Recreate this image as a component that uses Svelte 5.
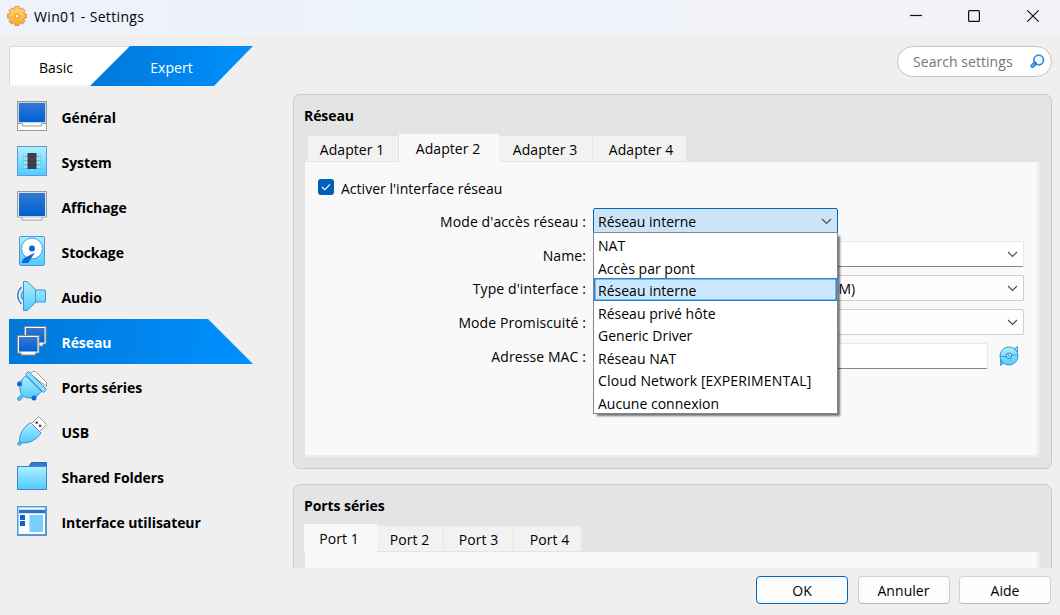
<script>
  const sections = [
    { id: 'general', label: 'Général' },
    { id: 'system', label: 'System' },
    { id: 'display', label: 'Affichage' },
    { id: 'storage', label: 'Stockage' },
    { id: 'audio', label: 'Audio' },
    { id: 'network', label: 'Réseau' },
    { id: 'serial', label: 'Ports séries' },
    { id: 'usb', label: 'USB' },
    { id: 'folders', label: 'Shared Folders' },
    { id: 'ui', label: 'Interface utilisateur' }
  ];
  const adapters = ['Adapter 1', 'Adapter 2', 'Adapter 3', 'Adapter 4'];
  const ports = ['Port 1', 'Port 2', 'Port 3', 'Port 4'];
  const modes = [
    'NAT',
    'Accès par pont',
    'Réseau interne',
    'Réseau privé hôte',
    'Generic Driver',
    'Réseau NAT',
    'Cloud Network [EXPERIMENTAL]',
    'Aucune connexion'
  ];
  let section = $state('network');
  let adapter = $state('Adapter 2');
  let port = $state('Port 1');
  let mode = $state('Réseau interne');
</script>

{#snippet chevron()}
  <svg class="chevron" width="11" height="7" viewBox="0 0 11 7"><path d="M1 1l4.500 4.500L10 1" fill="none" stroke="#4a4a4a" stroke-width="1.100" /></svg>
{/snippet}

{#snippet icon(id)}
  <svg class="icon" width="30" height="30" viewBox="0 0 30 30">
    {#if id === 'general'}
      <rect x=".5" y=".5" width="29" height="29" fill="#fff" stroke="#9a9a9a" />
      <rect x="1" y="1" width="28" height="21" fill="#c3d3ea" />
      <rect x="2" y="2" width="26" height="19" fill="url(#screen)" />
      <path d="M1 22.500h4.500v2.500h19v-2.500h4.500" fill="none" stroke="#9a9a9a" />
    {:else if id === 'system'}
      <rect x=".5" y=".5" width="29" height="29" fill="url(#sky)" stroke="#5b9bd8" />
      <path d="M6 9.500h18M6 13.500h18M6 17.500h18M6 21.500h18" stroke="#5eb0dc" stroke-width="2.600" />
      <path d="M6.500 9h17M6.500 13h17M6.500 17h17M6.500 21h17" stroke="#fff" stroke-width="1.200" />
      <rect x="10.500" y="7" width="9" height="16" fill="#3a3f4b" />
    {:else if id === 'display'}
      <path d="M.5.500h29v25.500h-4.500v3H5v-3H.500z" fill="#fff" stroke="#9a9a9a" />
      <rect x="1" y="1" width="28" height="24.500" fill="#dbe4f1" />
      <rect x="2" y="2" width="26" height="23" fill="url(#screen)" />
      <path d="M5 26h20" stroke="#b0b0b0" />
    {:else if id === 'storage'}
      <rect x="2.500" y=".5" width="25" height="29" rx="1.500" fill="url(#sky)" stroke="#4b95d8" />
      <circle cx="15" cy="12.500" r="10.500" fill="#fff" stroke="#4b9be0" />
      <circle cx="15" cy="12.500" r="2.900" fill="#0f63c4" />
      <path d="M18 16.500l-10.500 5.500q-3 2-2.500 5h5.500q1.500-.5 2.500-3z" fill="#1068ce" />
    {:else if id === 'audio'}
      <path d="M4.500 6q-7.500 8.500 0 17" fill="none" stroke="#2f7fd6" stroke-width="1.300" />
      <path d="M6 10q-3.500 4.500 0 9" fill="#a5dcf7" stroke="#4b95d8" stroke-width="1.200" />
      <path d="M6.500.500h3.500l9 8.500h9q.500 0 .5.500v11q0 .5-.5.500h-9l-9 8.500H6.500z" fill="url(#sky)" stroke="#3f8fd6" />
      <path d="M18.500 9v12" stroke="#4b95d8" />
    {:else if id === 'network'}
      <path d="M7.500.500h21.500v17.500h-3v2H10v-2H7.500z" fill="#fff" stroke="#8b8b80" />
      <rect x="9" y="2" width="18.500" height="14.500" fill="url(#screen)" />
      <path d="M.5 9.500h21.500v17.500h-3.500v2H4v-2H.500z" fill="#fff" stroke="#8b8b80" />
      <rect x="2" y="11" width="18.500" height="14.500" fill="url(#screen)" />
    {:else if id === 'serial'}
      <path d="M12.500 2.500l3.500-2h2.500l11 11v4z" fill="#fff" stroke="#999" />
      <path d="M5 25l-4 4" stroke="#3f8fd6" stroke-width="3.800" />
      <path d="M5.500 24.500l-4 4" stroke="#5bc8f7" stroke-width="1.800" />
      <path d="M8.500 5L3 10.500v7q-.5 4 2.500 7 3 3 7.500 2.500h4.500l7-6.500z" fill="url(#sky)" stroke="#3f8fd6" />
      <path d="M6 9.500l-4 4M21 23.500l-4 3" stroke="#3f8fd6" />
      <circle cx="2.500" cy="13" r="2.500" fill="#1067cc" />
      <circle cx="17" cy="27" r="2.500" fill="#1067cc" />
      <path d="M8.500 3.500l3-3 18 18-3 3z" fill="#84e2fc" stroke="#3f8fd6" />
    {:else if id === 'usb'}
      <path d="M14.500 7.500L21.500.500 29.500 8.500l-7 7z" fill="#fff" stroke="#999" />
      <path d="M18.500 5.500h2.300v2.300h-2.300zM22 8.800h2.300v2.300h-2.300z" fill="#444" />
      <path d="M4.500 25.500l-3.500 3.500" stroke="#3f8fd6" stroke-width="3.600" />
      <path d="M4.500 25.500l-3.500 3.500" stroke="#5bc8f7" stroke-width="1.600" />
      <path d="M13.500 6.500q-10.500 7-11 17-.5 3 2.500 3.500 12 .5 19-10z" fill="url(#sky)" stroke="#3f8fd6" />
    {:else if id === 'folders'}
      <path d="M11.500 6l3-4.500h15v5z" fill="#2f78d4" stroke="#2468bd" />
      <rect x=".5" y="5.500" width="29" height="23" fill="url(#sky)" stroke="#4589c6" />
    {:else}
      <rect x="1" y="1" width="28" height="28" fill="#fff" stroke="#5796cf" stroke-width="2" />
      <path d="M1.500 28V1.500H28.500" fill="none" stroke="#8fdcf8" />
      <path d="M2 5.500h26" stroke="#2c72cc" stroke-width="3.500" />
      <path d="M3 9h5v5H3zM3 15h5v5H3z" fill="#0d62cc" />
      <rect x="12.500" y="9" width="13.500" height="17" fill="#79cffb" />
    {/if}
  </svg>
{/snippet}

{#snippet tabs(items, current, pick)}
  <div class="tabs">
    {#each items as t}
      <button class="tab" class:active={t === current} onclick={() => pick(t)}>{t}</button>
    {/each}
  </div>
{/snippet}

<svg class="defs" width="0" height="0">
  <defs>
    <linearGradient id="screen" x1="0" y1="0" x2="0" y2="1"><stop offset="0" stop-color="#3478d3" /><stop offset="1" stop-color="#0060d2" /></linearGradient>
    <linearGradient id="sky" x1="0" y1="0" x2="0" y2="1"><stop offset="0" stop-color="#aef0fe" /><stop offset="1" stop-color="#4fcbff" /></linearGradient>
    <linearGradient id="gold" x1="0" y1="0" x2="0" y2="1"><stop offset="0" stop-color="#ffda66" /><stop offset="1" stop-color="#f9a72b" /></linearGradient>
  </defs>
</svg>

<div class="window">
  <header>
    <svg width="20" height="20" viewBox="0 0 20 20">
      <g fill="url(#gold)" stroke="#d98545" stroke-width=".9" stroke-linejoin="round">
        <path d="M8 .600h4l.4 2.200.9.400 1.900-1.300 2.800 2.800-1.300 1.900.4.900 2.300.5v4l-2.300.5-.4.900 1.300 1.900-2.800 2.800-1.900-1.300-.9.400-.4 2.200H8l-.4-2.200-.9-.4-1.900 1.300L2 15.300l1.300-1.900-.4-.9L.600 12V8l2.300-.5.400-.9L2 4.700 4.800 1.900l1.900 1.300.9-.4z" />
        <circle cx="10" cy="10" r="2" fill="#fff4dc" />
      </g>
    </svg>
    <span class="title">Win01 - Settings</span>
    <svg class="controls" width="130" height="14" viewBox="0 0 130 14">
      <g fill="none" stroke="#111" stroke-width="1.200">
        <path d="M0 6.500h12" />
        <rect x="58.600" y="1.600" width="10.800" height="10.800" rx="1" />
        <path d="M117.300 1.300l11.400 11.400M128.700 1.300L117.300 12.700" />
      </g>
    </svg>
  </header>

  <div class="toolbar">
    <div class="levels">
      <button class="basic">Basic</button>
      <button class="expert"><span>Expert</span></button>
    </div>
    <div class="search">
      <span>Search settings</span>
      <svg width="15" height="15" viewBox="0 0 15 15">
        <circle cx="8.700" cy="6" r="4.800" fill="#f4fbff" stroke="#3a8fdf" stroke-width="1.800" />
        <path d="M5 9.500L2.500 12" stroke="#2b7fd8" stroke-width="4" stroke-linecap="round" />
        <path d="M3.700 10.500L2.500 12" stroke="#4fbdf5" stroke-width="2" stroke-linecap="round" />
      </svg>
    </div>
  </div>

  <main>
    <nav>
      {#each sections as s}
        <button class="item" class:selected={s.id === section} onclick={() => (section = s.id)}>
          {@render icon(s.id)}
          <span>{s.label}</span>
        </button>
      {/each}
    </nav>

    <div class="pages">
      <section class="card network">
        <h2>Réseau</h2>
        {@render tabs(adapters, adapter, (t) => (adapter = t))}
        <div class="pane">
          <label class="check">
            <span class="box"><svg width="10" height="8" viewBox="0 0 10 8"><path d="M1 4l2.700 2.700L9 1.300" fill="none" stroke="#fff" stroke-width="1.100" /></svg></span>
            <span class="check-text">Activer l'interface réseau</span>
          </label>
          <div class="form">
            <span class="label">Mode d'accès réseau :</span>
            <div class="combo open">
              <span>{mode}</span>{@render chevron()}
              <ul>
                {#each modes as m}
                  <li class:current={m === mode}>{m}</li>
                {/each}
              </ul>
            </div>
            <span class="label">Name:</span>
            <div class="combo editable">{@render chevron()}</div>
            <span class="label up">Type d'interface :</span>
            <div class="combo"><span class="tail">M)</span>{@render chevron()}</div>
            <span class="label up">Mode Promiscuité :</span>
            <div class="combo">{@render chevron()}</div>
            <span class="label up">Adresse MAC :</span>
            <div class="mac">
              <div class="field"></div>
              <svg width="20" height="20" viewBox="0 0 20 20">
                <path d="M15.500 2.800L18.500.600V9z" fill="#9be7fd" stroke="#3f93da" />
                <path d="M4.500 17.200L1.500 19.400V11z" fill="#5bccfb" stroke="#3f93da" />
                <circle cx="10" cy="10" r="9" fill="url(#sky)" stroke="#3f93da" />
                <path d="M12 9h7M8 10.500H1" stroke="#3f93da" />
                <circle cx="10" cy="9.800" r="2.600" fill="#eefaff" stroke="#4a90cc" stroke-width="1.200" />
                <path d="M8.800 8.700l2.400 2.200" stroke="#3d82c4" stroke-width="1.200" />
              </svg>
            </div>
          </div>
        </div>
      </section>

      <section class="card serial">
        <h2>Ports séries</h2>
        {@render tabs(ports, port, (t) => (port = t))}
        <div class="pane"></div>
      </section>
    </div>
  </main>

  <footer>
    <button class="push default">OK</button>
    <button class="push">Annuler</button>
    <button class="push">Aide</button>
  </footer>
</div>

<style>
  :global(body) { margin: 0; overflow: hidden; }
  * { box-sizing: border-box; }
  button { font: inherit; color: inherit; border: 0; padding: 0; margin: 0; background: none; letter-spacing: inherit; }
  .defs { position: absolute; }
  .window {
    width: 1060px; height: 615px; display: flex; flex-direction: column;
    background: #efefef; color: #000; overflow: hidden;
    font: 14px/20px "Open Sans", "Noto Sans", sans-serif; white-space: nowrap; letter-spacing: .05px;
  }
  header {
    height: 35px; flex: none; display: flex; align-items: center; padding: 0 20px 3px 7px;
    background: linear-gradient(90deg, #edf2fb, #edf3fa 45%, #f2f2f8 75%, #f1f2f7);
  }
  .title { margin: 2px 0 0 7px; letter-spacing: .35px; }
  .controls { margin-left: auto; }

  .toolbar { display: flex; justify-content: space-between; padding: 11px 8px 0 9px; height: 59px; flex: none; }
  .levels { display: flex; height: 40px; }
  .basic { width: 122px; padding-right: 29px; padding-top: 3px; background: #fff; border: 1px solid #d9d9d9; border-bottom-color: #f4f4f4; border-right: 0; }
  .expert {
    width: 163px; margin-left: -41px; padding-top: 3px; color: #fff;
    background: linear-gradient(100deg, #0078d8, #0090ff);
    clip-path: polygon(40px 0, 100% 0, 124px 100%, 0 100%);
  }
  .search {
    width: 155px; height: 31px; border: 1px solid #c4c4c4; border-radius: 16px; background: #fff;
    display: flex; align-items: center; justify-content: space-between; padding: 0 6px 0 15px; color: #767676;
  }

  main { display: flex; height: 474px; flex: none; padding-left: 9px; }
  nav { width: 284px; flex: none; }
  .item { display: flex; align-items: center; width: 244px; height: 45px; padding: 0 0 1px 8px; font-weight: 700; letter-spacing: -.08px; }
  .item span { margin: 4px 0 0 14.500px; }
  .icon { display: block; }
  .item.selected { color: #fff; background: linear-gradient(100deg, #0078d8, #0090ff); clip-path: polygon(0 0, 199px 0, 100% 100%, 0 100%); }

  .pages { width: 759px; display: flex; flex-direction: column; gap: 15px; overflow: hidden; }
  .card { flex: none; border: 1px solid #cbcbcb; border-radius: 7px; background: #e4e4e4; padding: 10px 11px 0 10px; }
  .network { height: 375px; }
  .serial { height: 150px; }
  h2 { margin: 0; font-size: 14px; line-height: 22px; font-weight: 700; letter-spacing: -.08px; height: 29px; }
  .tabs { display: flex; height: 28px; align-items: flex-end; padding-left: 4px; }
  .serial .tabs { padding-left: 0; }
  .tab { height: 26px; width: 94px; background: #f2f2f2; border-right: 1px solid #e4e4e4; border-bottom: 1px solid #e4e4e4; padding: 2px 1px 0 0; }
  .tab:first-child { width: 91px; padding-right: 2px; }
  .tab:last-child { width: 93px; border-right: 0; padding-left: 4px; }
  .tab.active { width: 100px; height: 28px; background: #f9f9f9; border-color: #f9f9f9; }
  .serial .tab { width: 70px; padding-right: 0; }
  .serial .tab:nth-child(2) { width: 67px; padding-right: 1px; }
  .serial .tab:last-child { width: 67px; }
  .serial .tab.active { width: 73px; padding-right: 2px; }
  .pane { margin-left: 1px; width: 735px; height: 295px; background: #f9f9f9; border: solid #ededed; border-width: 0 3px 2px 0; padding: 16px 14px; }

  .check { display: flex; height: 22px; align-items: center; }
  .box { width: 16px; height: 16px; margin: -4px 7px 0 -1px; border-radius: 3px; background: #005fb8; display: flex; align-items: center; justify-content: center; }
  .check-text { letter-spacing: .02px; }
  .form { display: grid; grid-template-columns: 267px 431px; column-gap: 7px; row-gap: 8px; grid-auto-rows: 26px; margin-top: 7px; }
  .label { text-align: right; padding-top: 5px; letter-spacing: .1px; }
  .label.up { padding-top: 4px; }
  .combo { position: relative; display: flex; align-items: center; border: 1px solid #d0d0d0; border-radius: 2px; background: #fdfdfd; padding: 0 5px 0 4px; }
  .combo > span { padding-top: 1px; letter-spacing: 0; }
  .combo .chevron { margin-left: auto; }
  .combo.editable { background: #fff; border-color: #e8e8e8; border-bottom-color: #868686; }
  .combo.open { width: 245px; background: #cce4f7; border-color: #0067c0; margin-top: 1px; height: 26px; }
  .combo.open > span { padding-top: 2px; }
  .combo > .tail { margin-left: 240.500px; }
  ul {
    position: absolute; z-index: 2; left: -1px; top: 23px; width: 245px; height: 182px; margin: 0; padding: 0;
    list-style: none; background: #fff; border: 1px solid #82868c; box-shadow: 3px 3px 2px -1px rgba(0, 0, 0, .55);
    display: flex; flex-direction: column;
  }
  li { height: 22.500px; padding-left: 4px; line-height: 25px; letter-spacing: .02px; }
  li:nth-child(7) { letter-spacing: .14px; }
  li.current { background: #cce8ff; box-shadow: inset 0 0 0 1.500px #2088dc; }
  .mac { display: flex; align-items: center; }
  .mac svg { margin-left: 11px; }
  .field { width: 395px; height: 26px; background: #fff; border: 1px solid #e8e8e8; border-bottom-color: #868686; border-radius: 2px; }

  footer { display: flex; justify-content: flex-end; gap: 9.500px; padding: 8px 9px 0 0; }
  .push { width: 92px; height: 28px; background: #fdfdfd; border: 1px solid #d0d0d0; border-bottom-color: #b9b9b9; border-radius: 4px; padding-top: 1px; }
  .default { border-color: #0067c0; }
</style>
